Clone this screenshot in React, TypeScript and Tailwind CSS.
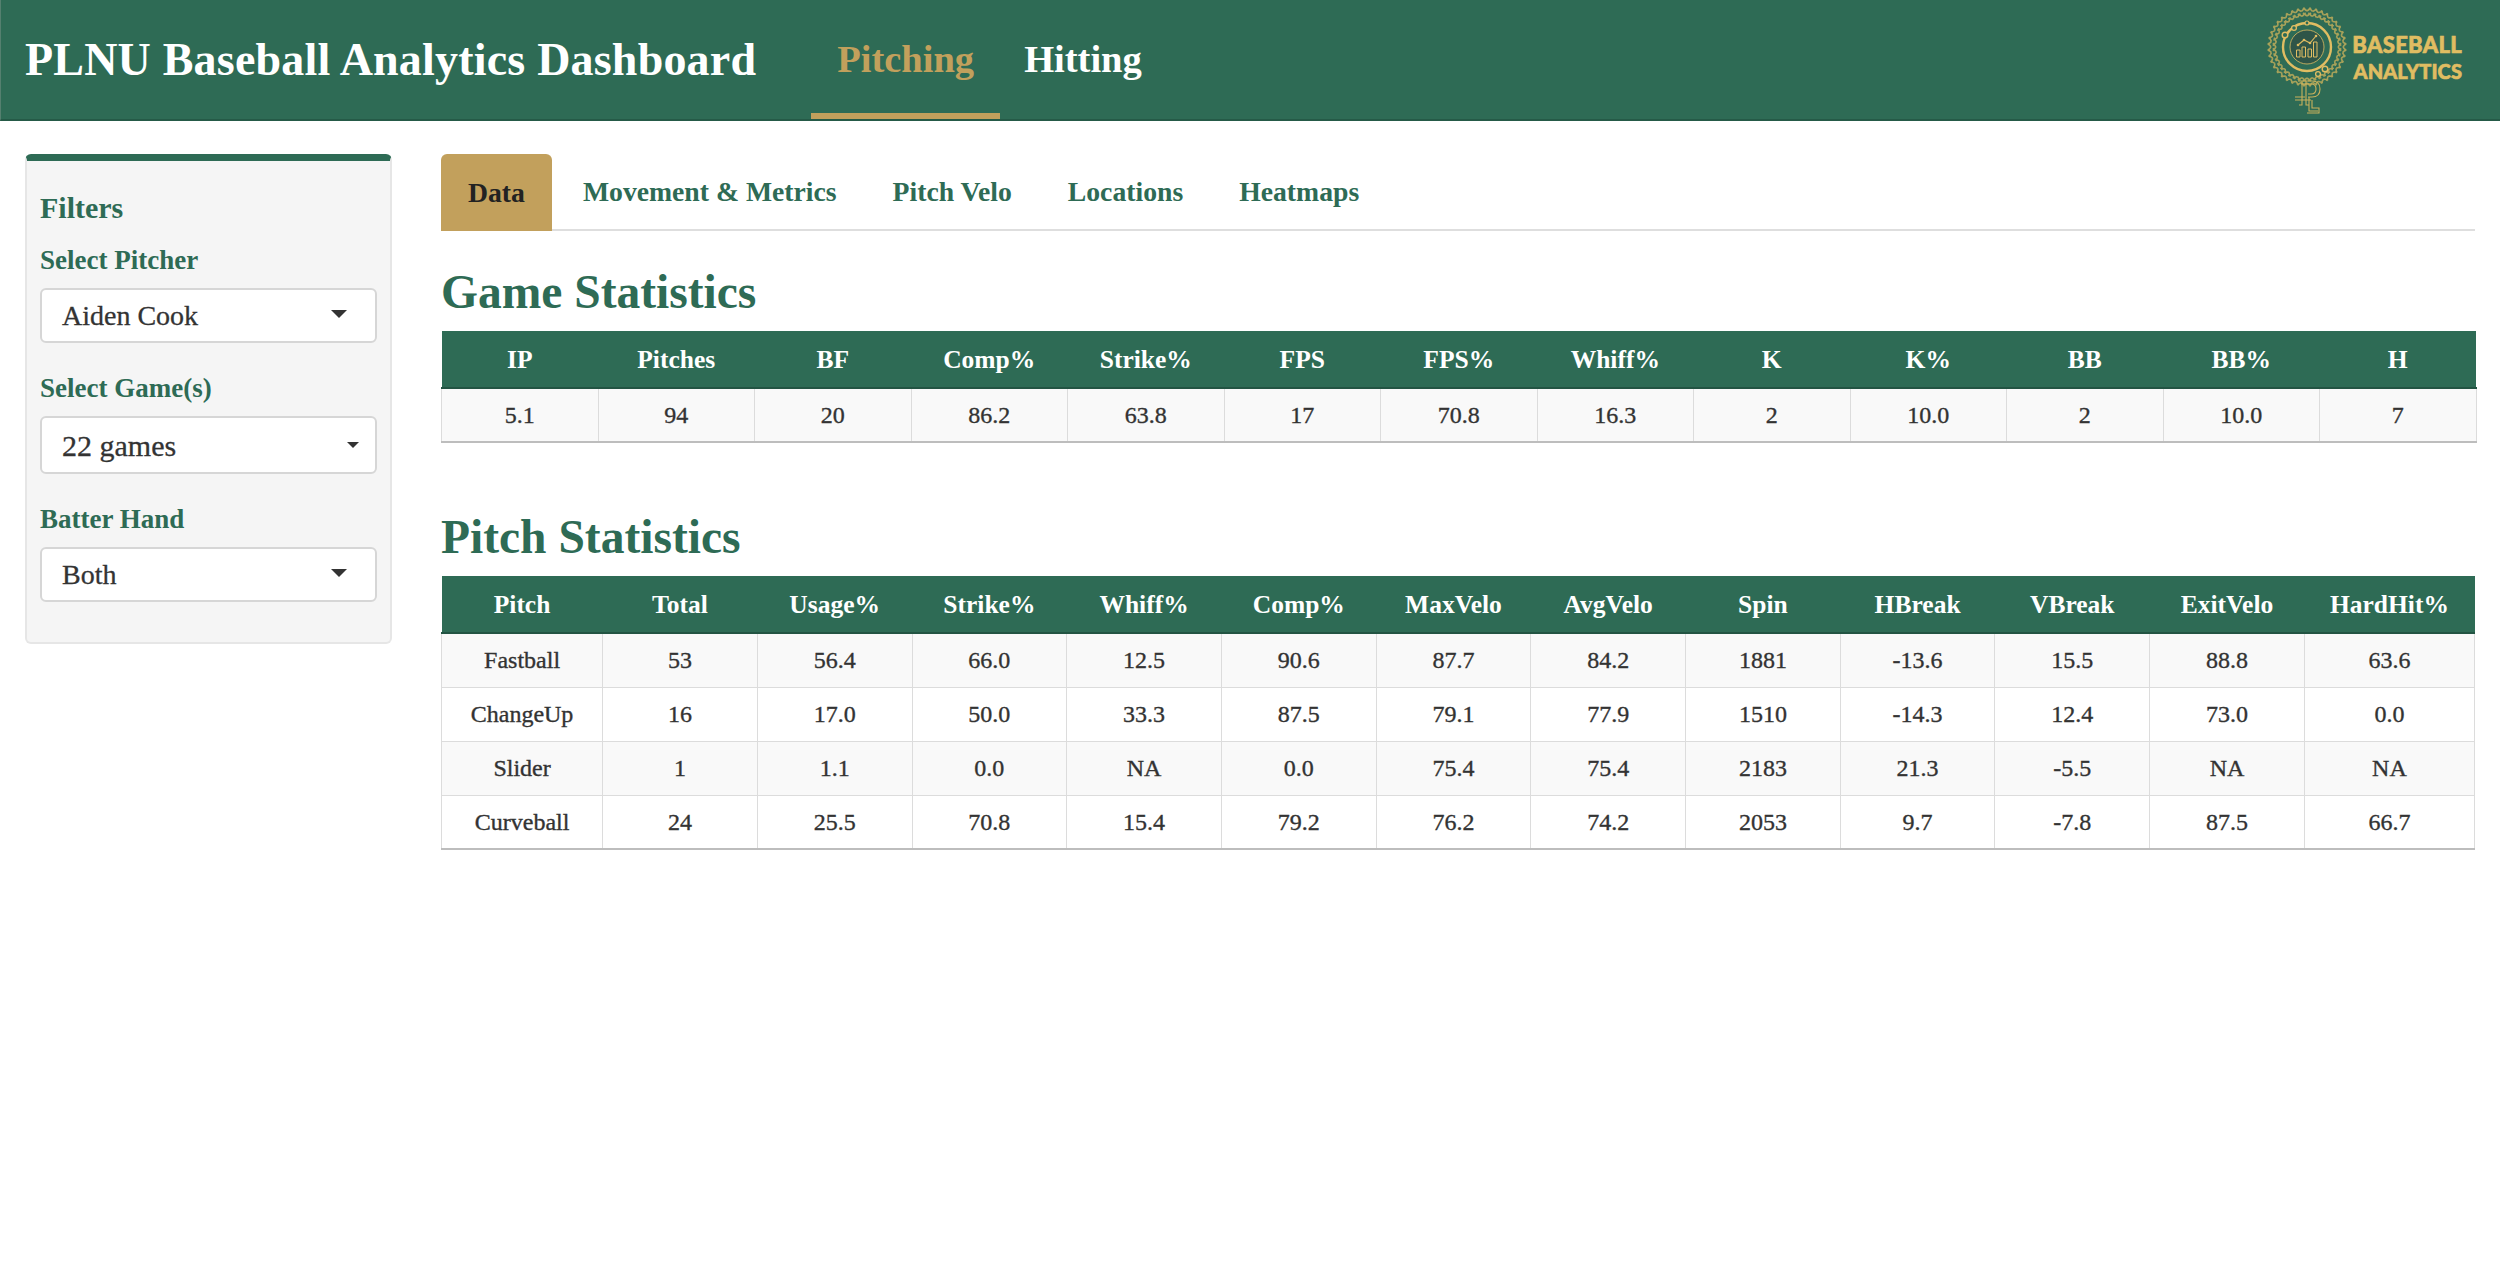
const gameCols = ['IP', 'Pitches', 'BF', 'Comp%', 'Strike%', 'FPS', 'FPS%', 'Whiff%', 'K', 'K%', 'BB', 'BB%', 'H']
const gameRow = ['5.1', '94', '20', '86.2', '63.8', '17', '70.8', '16.3', '2', '10.0', '2', '10.0', '7']

const pitchCols = ['Pitch', 'Total', 'Usage%', 'Strike%', 'Whiff%', 'Comp%', 'MaxVelo', 'AvgVelo', 'Spin', 'HBreak', 'VBreak', 'ExitVelo', 'HardHit%']
const pitchRows = [
  ['Fastball', '53', '56.4', '66.0', '12.5', '90.6', '87.7', '84.2', '1881', '-13.6', '15.5', '88.8', '63.6'],
  ['ChangeUp', '16', '17.0', '50.0', '33.3', '87.5', '79.1', '77.9', '1510', '-14.3', '12.4', '73.0', '0.0'],
  ['Slider', '1', '1.1', '0.0', 'NA', '0.0', '75.4', '75.4', '2183', '21.3', '-5.5', 'NA', 'NA'],
  ['Curveball', '24', '25.5', '70.8', '15.4', '79.2', '76.2', '74.2', '2053', '9.7', '-7.8', '87.5', '66.7'],
]

const tabs = ['Movement & Metrics', 'Pitch Velo', 'Locations', 'Heatmaps']
const stitches = Array.from({ length: 40 }, (_, i) => (i * 360) / 40)

function Logo() {
  return (
    <div className="flex items-start mr-[38px] mt-[5px]">
      <svg width="84" height="110" viewBox="0 0 84 110" fill="none" className="mr-[3px]">
        {stitches.map((deg) => (
          <g key={deg} transform={`rotate(${deg} 42 40)`} stroke="#a8a25a" strokeWidth="1.6">
            <path d="M42 4 L38 1" />
            <path d="M42 4 L46 1" />
            <path d="M42 9 L38 6" />
            <path d="M42 9 L46 6" />
          </g>
        ))}
        <circle cx="42" cy="40" r="24" fill="#2e6b55" stroke="#e0bd62" strokeWidth="2.4" />
        <circle cx="42" cy="40" r="17" fill="#2f5548" stroke="#e0bd62" strokeWidth="0.8" />
        <circle cx="20" cy="28" r="2.8" fill="#2e6b55" stroke="#e0bd62" strokeWidth="1.4" />
        <circle cx="29" cy="21" r="2.4" fill="#2e6b55" stroke="#e0bd62" strokeWidth="1.3" />
        <circle cx="42" cy="16" r="2" fill="#2e6b55" stroke="#e0bd62" strokeWidth="1.2" />
        <circle cx="60" cy="62" r="2.8" fill="#2e6b55" stroke="#e0bd62" strokeWidth="1.4" />
        <circle cx="53" cy="67" r="2.4" fill="#2e6b55" stroke="#e0bd62" strokeWidth="1.3" />
        <path d="M33 38 L39 33 L45 36 L51 29" stroke="#e0bd62" strokeWidth="1.1" />
        <circle cx="33" cy="38" r="1.3" fill="#e0bd62" />
        <circle cx="39" cy="33" r="1.3" fill="#e0bd62" />
        <circle cx="45" cy="36" r="1.3" fill="#e0bd62" />
        <circle cx="51" cy="29" r="1.3" fill="#e0bd62" />
        <path d="M31.500 43h3.500v7h-3.500zM37 40h3.500v10h-3.500zM43 42h3.500v8h-3.500zM48.500 35h3.500v15h-3.500z" stroke="#e0bd62" strokeWidth="1" />
        <g stroke="#c9b25c" strokeWidth="1.1">
          <path d="M33 74 H47 Q55 74 55 82 Q55 90 47 90 H43" />
          <path d="M36 77 H46 Q51 77 51 82 Q51 87 46 87 H43" />
          <path d="M37 74 V98 H34 M41 74 V98 H44" />
          <path d="M30 90 H40 M30 93 H46" />
          <path d="M44 90 V104 H53 M47 93 V101 H54 V106 H42" />
        </g>
      </svg>
      <div className="flex flex-col items-end mt-[27px] font-['Lato',sans-serif] font-black text-[#e0bd62] leading-none [-webkit-text-stroke:0.6px_#e0bd62]">
        <span className="text-[22px] tracking-[0.3px]">BASEBALL</span>
        <span className="text-[20px] mt-[5px] tracking-[0.1px]">ANALYTICS</span>
      </div>
    </div>
  )
}

function FilterSelect({ label, value, tall }: { label: string; value: string; tall?: boolean }) {
  return (
    <div className="mb-[29px]">
      <div className="text-[27px] leading-[32px] font-bold text-[#2e6b55] mb-[12px]">{label}</div>
      <div className={`flex items-center justify-between bg-white border-2 border-[#d6d6d6] rounded-[6px] pl-[20px] text-[#333] [-webkit-text-stroke:0.3px_#333] ${tall ? 'h-[58px] pr-[16px] text-[30px]' : 'h-[55px] pr-[28px] text-[28px]'}`}>
        <span>{value}</span>
        {tall ? (
          <span className="border-x-[6px] border-x-transparent border-t-[6px] border-t-[#333]" />
        ) : (
          <span className="border-x-[8px] border-x-transparent border-t-[8px] border-t-[#333] mb-[3px]" />
        )}
      </div>
    </div>
  )
}

function StatTable({ cols, rows, first, last, colWidth }: { cols: string[]; rows: string[][]; first: string; last: string; colWidth: string }) {
  return (
    <table className="w-full table-fixed border-collapse border-b-2 border-b-[#bdbdbd]">
      <colgroup>
        {cols.map((c, i) => (
          <col key={c} className={i === 0 ? first : i === cols.length - 1 ? last : colWidth} />
        ))}
      </colgroup>
      <thead>
        <tr className="bg-[#2e6b55] text-white border-b-2 border-b-[#235443]">
          {cols.map((c) => (
            <th key={c} className="h-[57px] pt-[2px] text-[25.5px] font-bold">{c}</th>
          ))}
        </tr>
      </thead>
      <tbody>
        {rows.map((row, i) => (
          <tr key={i} className={i % 2 === 0 ? 'bg-[#f9f9f9]' : 'bg-white'}>
            {row.map((v, j) => (
              <td key={j} className="h-[54px] text-[24px] text-center text-[#333] border border-[#dcdcdc] [-webkit-text-stroke:0.35px_#333]">{v}</td>
            ))}
          </tr>
        ))}
      </tbody>
    </table>
  )
}

export default function App() {
  return (
    <div className="min-h-[1262px] bg-white font-['Liberation_Serif',serif]">
      <header className="h-[121px] bg-[#2e6b55] border-b-2 border-b-[#255a47] border-l border-l-[#55806f] flex items-center justify-between">
        <div className="flex items-center h-full">
          <h1 className="ml-[24px] text-[46px] font-bold text-white tracking-[0.2px]">PLNU Baseball Analytics Dashboard</h1>
          <nav className="flex ml-[55px] h-full text-[38.5px] font-bold">
            <span className="h-full flex items-center px-[26px] text-[#c2a05c] border-b-[6px] border-b-[#c2a05c] pt-[6px]">Pitching</span>
            <span className="h-full flex items-center px-[24px] text-white border-b-[6px] border-b-transparent pt-[6px]">Hitting</span>
          </nav>
        </div>
        <Logo />
      </header>

      <main className="flex items-start pt-[33px] pl-[25px] pr-[25px]">
        <aside className="w-[367px] shrink-0 bg-[#f5f5f5] border-2 border-[#e6e6e6] border-t-[7px] border-t-[#2e6b55] rounded-[6px] pt-[27px] px-[13px] pb-[11px]">
          <h2 className="text-[30px] leading-[40px] font-bold text-[#2e6b55] mb-[16px]">Filters</h2>
          <FilterSelect label="Select Pitcher" value="Aiden Cook" />
          <FilterSelect label="Select Game(s)" value="22 games" tall />
          <FilterSelect label="Batter Hand" value="Both" />
        </aside>

        <section className="flex-1 min-w-0 ml-[49px]">
          <div className="flex items-stretch h-[77px] border-b-2 border-b-[#dedede] text-[27.7px] font-bold">
            <div className="flex items-center px-[27px] bg-[#c2a05c] text-[#222] rounded-t-[6px] -mb-[2px]">Data</div>
            {tabs.map((t, i) => (
              <div key={t} className={`flex items-center px-[28px] text-[#2e6b55] ${i === 0 ? 'ml-[3px]' : ''}`}>{t}</div>
            ))}
          </div>

          <h2 className="mt-[35px] mb-[13px] text-[47.5px] leading-[52px] font-bold text-[#2e6b55]">Game Statistics</h2>
          <StatTable cols={gameCols} rows={[gameRow]} first="w-[156.5px]" last="w-[156.5px]" colWidth="w-[156.5px]" />

          <h2 className="mt-[68px] mb-[13px] text-[47.5px] leading-[52px] font-bold text-[#2e6b55]">Pitch Statistics</h2>
          <StatTable cols={pitchCols} rows={pitchRows} first="w-[161px]" last="w-[170px]" colWidth="w-[154.6px]" />
        </section>
      </main>
    </div>
  )
}
